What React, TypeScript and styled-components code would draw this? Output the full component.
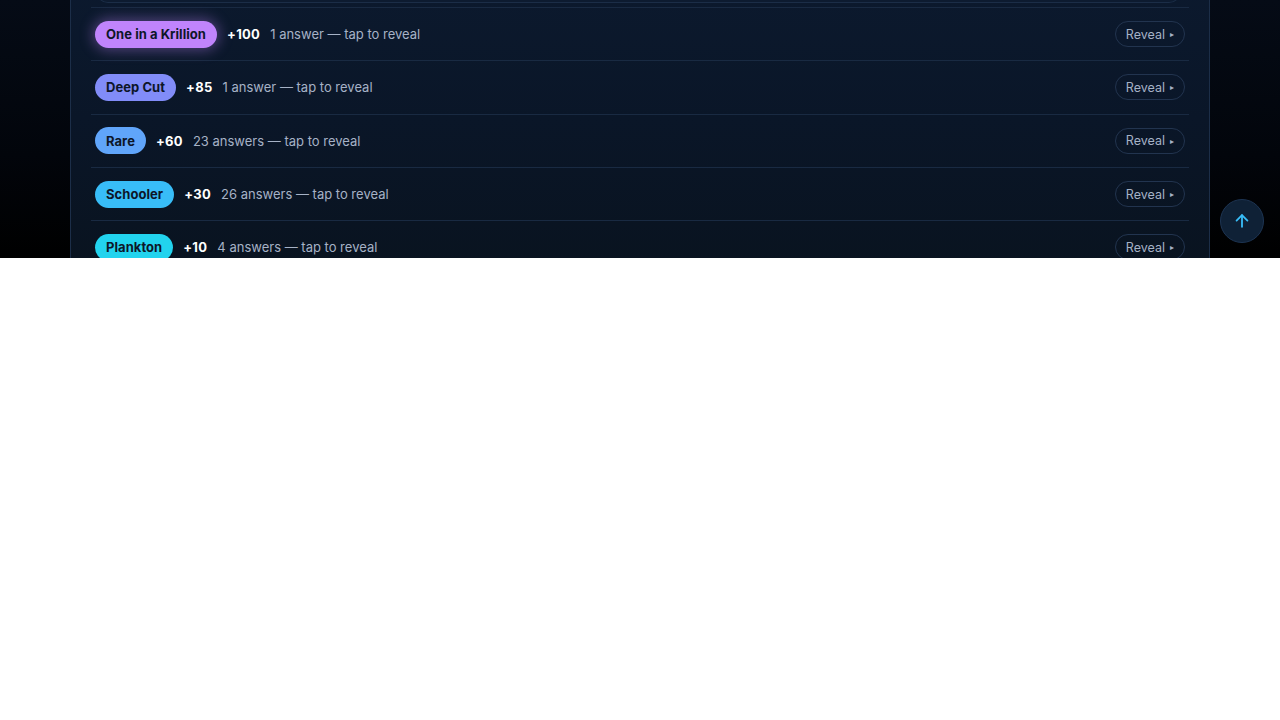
import React from "react"
import styled, { createGlobalStyle } from "styled-components"

const GlobalStyle = createGlobalStyle`
  html, body {
    margin: 0;
    padding: 0;
    background: #ffffff;
  }
  body {
    font-family: Inter, "Noto Sans", sans-serif;
  }
`

type Tier = {
  name: string
  points: number
  answers: number
  color: string
  glow?: boolean
}

const tiers: Tier[] = [
  { name: "One in a Krillion", points: 100, answers: 1, color: "#c084fc", glow: true },
  { name: "Deep Cut", points: 85, answers: 1, color: "#818cf8" },
  { name: "Rare", points: 60, answers: 23, color: "#60a5fa" },
  { name: "Schooler", points: 30, answers: 26, color: "#38bdf8" },
  { name: "Plankton", points: 10, answers: 4, color: "#22d3ee" },
]

const App: React.FC = () => {
  return (
    <>
      <GlobalStyle />
      <Viewport>
        <Panel>
          <PrevRow>
            <AnswerBox />
          </PrevRow>
          {tiers.map((tier) => (
            <Row key={tier.name}>
              <Pill $color={tier.color} $glow={tier.glow}>
                {tier.name}
              </Pill>
              <Points>+{tier.points}</Points>
              <Hint>
                {tier.answers} {tier.answers === 1 ? "answer" : "answers"} — tap to reveal
              </Hint>
              <RevealButton>
                Reveal <Arrow>▸</Arrow>
              </RevealButton>
            </Row>
          ))}
        </Panel>
        <TopButton aria-label="Back to top">
          <svg width="20" height="20" viewBox="0 0 24 24" fill="none" stroke="#38bdf8" strokeWidth="2.2" strokeLinecap="round" strokeLinejoin="round">
            <path d="M12 19V5" />
            <path d="M5.5 11.5L12 5l6.5 6.5" />
          </svg>
        </TopButton>
      </Viewport>
    </>
  )
}

const Viewport = styled.div`
  position: relative;
  height: 258px;
  overflow: hidden;
  background: linear-gradient(180deg, #050b16 0%, #02050b 60%, #000000 100%);
`

const Panel = styled.div`
  width: 1140px;
  margin: -42px 0 0 70px;
  padding: 0 20px;
  box-sizing: border-box;
  border-left: 1px solid #1c2e48;
  border-right: 1px solid #1c2e48;
  background: linear-gradient(180deg, #0c1a2f 0%, #0a1628 50%, #09131f 100%);
  min-height: 320px;
`

const PrevRow = styled.div`
  padding: 0 8px 4px 5px;
`

const AnswerBox = styled.div`
  height: 44px;
  border: 1px solid #1b2d47;
  border-top: none;
  border-radius: 0 0 12px 12px;
  background: #0d1b30;
`

const Row = styled.div`
  display: flex;
  align-items: center;
  box-sizing: border-box;
  height: 53.3px;
  padding: 0 4px 0 4px;
  border-top: 1px solid #192a42;
`

const Pill = styled.span<{ $color: string; $glow?: boolean }>`
  display: inline-flex;
  align-items: center;
  height: 27px;
  padding: 0 11px;
  border-radius: 14px;
  background: ${(p) => p.$color};
  color: #0d1628;
  font-size: 13px;
  font-weight: 700;
  letter-spacing: 0.05px;
  box-shadow: ${(p) => (p.$glow ? `0 0 14px 2px ${p.$color}66` : "none")};
`

const Points = styled.span`
  margin-left: 10px;
  color: #ffffff;
  font-size: 13px;
  font-weight: 700;
  letter-spacing: 0.3px;
`

const Hint = styled.span`
  margin-left: 10px;
  color: #a6b2c6;
  font-size: 13px;
`

const RevealButton = styled.button`
  margin-left: auto;
  display: inline-flex;
  align-items: center;
  gap: 5px;
  height: 26px;
  padding: 0 10px;
  border-radius: 13px;
  border: 1px solid #22344f;
  background: transparent;
  color: #a6b2c6;
  font-family: Inter, sans-serif;
  font-size: 12.5px;
  cursor: pointer;
`

const Arrow = styled.span`
  font-size: 8px;
  color: #a6b2c6;
`

const TopButton = styled.button`
  position: absolute;
  left: 1220px;
  top: 199px;
  width: 44px;
  height: 44px;
  border-radius: 50%;
  border: 1px solid #1d3452;
  background: #0f2136;
  display: flex;
  align-items: center;
  justify-content: center;
  padding: 0;
  cursor: pointer;
`

export default App
